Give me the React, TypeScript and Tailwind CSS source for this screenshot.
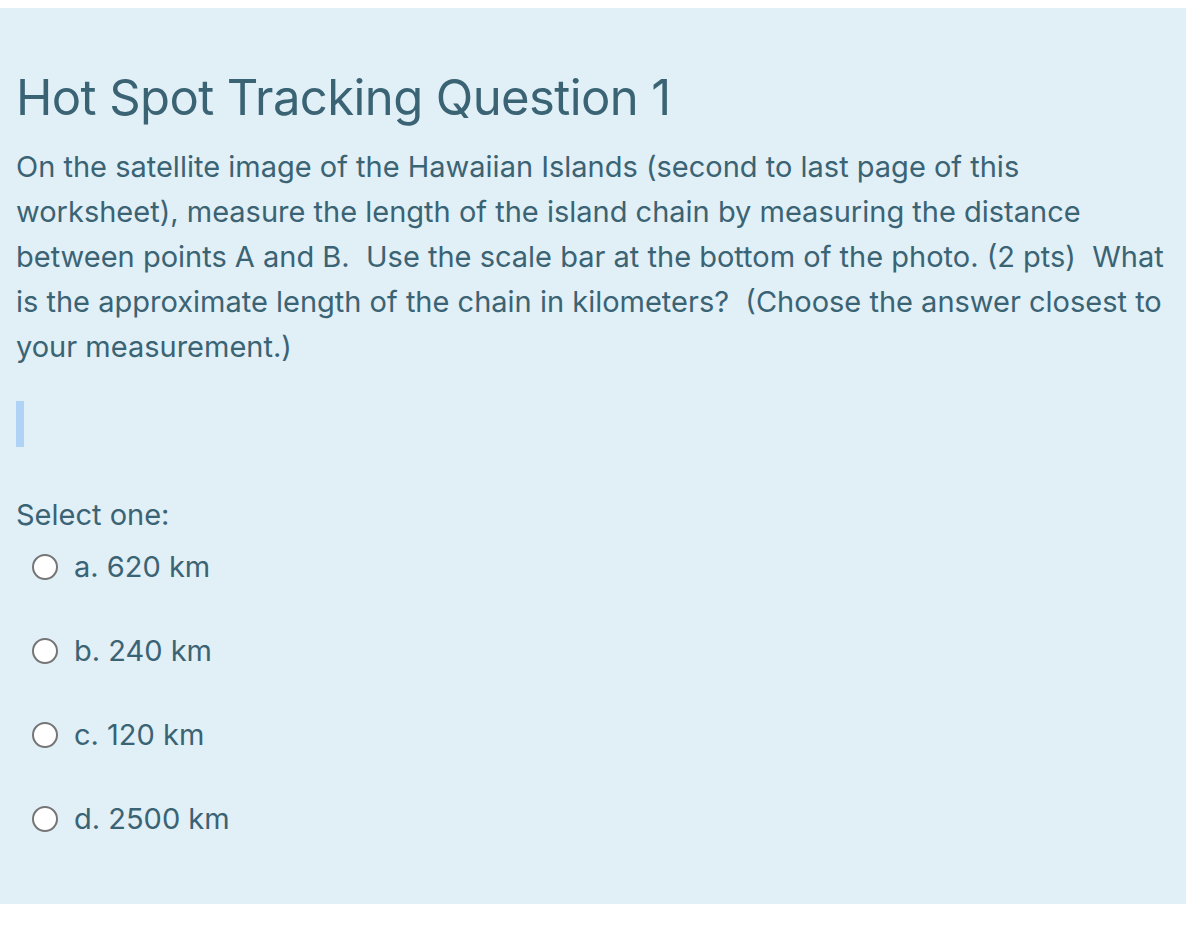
const options = ['a. 620 km', 'b. 240 km', 'c. 120 km', 'd. 2500 km'];

export default function App() {
  return (
    <div className="min-h-[936px] bg-white pt-2" style={{ fontFamily: 'Inter, "Noto Sans", sans-serif' }}>
      <div className="bg-[#e1eff7] pl-4 pr-4 pt-[60px] pb-[65px] text-[#3a6374]">
        <h2 className="text-[49px] leading-[60px] font-normal tracking-[-0.6px]">Hot Spot Tracking Question 1</h2>
        <p className="mt-[16px] text-[29px] leading-[45px]">
          On the satellite image of the Hawaiian Islands (second to last page of this worksheet), measure the length of the island chain by measuring the distance between points A and B.&nbsp; Use the scale bar at the bottom of the photo. (2 pts)&nbsp; What is the approximate length of the chain in kilometers?&nbsp; (Choose the answer closest to your measurement.)
        </p>
        <div className="mt-[32px] h-[46px] w-2 bg-[#afd2f7]" />
        <div className="mt-[48px] text-[29px] leading-[40px]">Select one:</div>
        <div className="mt-[12px] flex flex-col gap-[44px]">
          {options.map((o) => (
            <label key={o} className="flex items-center h-[40px] pl-4 text-[29px]">
              <span className="w-[26px] h-[26px] rounded-full border-2 border-[#757575] bg-white shrink-0" />
              <span className="ml-4">{o}</span>
            </label>
          ))}
        </div>
      </div>
    </div>
  );
}
